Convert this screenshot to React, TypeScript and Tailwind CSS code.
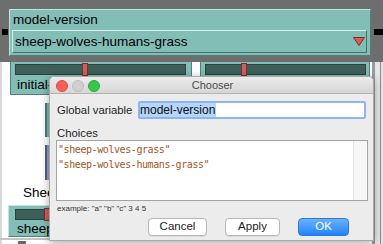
import React from "react";

const sans = "font-['Liberation_Sans',Arial,sans-serif]";

function Track({ w, handle }: { w: number; handle: number }) {
  return (
    <div
      className="relative h-[11px] bg-[#3e5f5a] border border-[#2a423e]"
      style={{ width: w }}
    >
      <div
        className="absolute top-[-2px] w-[6px] h-[13px] bg-[#c9625c] border border-[#7a302c]"
        style={{ left: handle }}
      />
    </div>
  );
}

export default function App() {
  return (
    <div className={`relative w-[383px] h-[244px] overflow-hidden bg-white text-black ${sans}`}>
      {/* selected chooser widget with its grey selection frame */}
      <div className="relative h-[62px] bg-[#6e6e6e] pt-[9px] pl-[9px]">
        <div className="flex flex-col w-[362px] h-[47px] bg-[#82bdb6] border border-t-[#c3e4df] border-l-[#c3e4df] border-b-[#4f807a] border-r-[#4f807a] pl-[2px] pr-[3px]">
          <div className="h-[20px] text-[13.5px] leading-[20px] pl-[1px]">model-version</div>
          <div className="flex items-center justify-between h-[23px] border border-t-[#d6efeb] border-l-[#d6efeb] border-b-[#45746e] border-r-[#45746e] pl-[2px] pr-[1px]">
            <span className="text-[13.5px] leading-[20px]">sheep-wolves-humans-grass</span>
            <svg width="12" height="9" viewBox="0 0 12 9">
              <polygon points="0.5,0.5 11.5,0.5 6,8.5" fill="#e05a55" stroke="#7e2c28" strokeWidth="1" />
            </svg>
          </div>
        </div>
        <div className="absolute left-[2px] top-[29px] w-[6px] h-[6px] bg-black" />
        <div className="absolute left-[374px] top-[29px] w-[9px] h-[6px] bg-black" />
      </div>

      {/* sliders row under the chooser */}
      <div className="flex h-[33px]">
        <div className="ml-[10px] w-[182px] h-full bg-[#82bdb6] border-l border-r border-b border-[#4f807a] pt-[2px] pl-[4px]">
          <Track w={171} handle={66} />
          <div className="text-[13.5px] leading-[16px] mt-[2px] pl-[2px]">initial-</div>
        </div>
        <div className="ml-[8px] w-[170px] h-full bg-[#82bdb6] border-l border-r border-b border-[#4f807a] pt-[2px] pl-[4px]">
          <Track w={161} handle={35} />
        </div>
      </div>

      {/* left border of the interface */}
      <div className="absolute left-0 top-[62px] w-[2px] h-[182px] bg-[#d8d8d8]" />

      {/* other widgets on the canvas, behind the dialog */}
      <div className="absolute left-[45px] top-[103px] w-[150px] h-[34px] bg-[#82bdb6] border-l-2 border-[#4d7d77]" />
      <div className="absolute left-[45px] top-[145px] w-[150px] h-[35px] bg-[#9d9fc7] border-l-2 border-[#5c5e88]" />
      <div className="absolute left-[23px] top-[184px] text-[13.5px] leading-[18px]">Sheep settings</div>
      <div className="absolute left-[8px] top-[205px] w-[180px] h-[32px] bg-[#82bdb6] border border-t-[#c3e4df] border-l-[#c3e4df] border-b-[#4f807a] border-r-[#4f807a] pt-[3px] pl-[6px]">
        <Track w={150} handle={28} />
        <div className="text-[13.5px] leading-[16px] mt-[1px] pl-[2px]">sheep-gain-from-food</div>
      </div>
      <div className="absolute left-0 top-[238px] w-[383px] h-[2px] bg-[#c4c4c4]" />
      <div className="absolute left-[18px] top-[241px] w-[8px] h-[3px] bg-[#6a6a6a]" />

      {/* right edge lines */}
      <div className="absolute left-[372px] top-[62px] w-[11px] h-[182px] bg-[#e6e6e6] border-l-[3px] border-[#9b9b9b]" />
      <div className="absolute left-[380px] top-[62px] w-[1px] h-[182px] bg-[#8a8a8a]" />

      {/* Chooser dialog */}
      <div className="absolute left-[49px] top-[76px] w-[325px] h-[165px] flex flex-col bg-[#ececec] border border-[#a9a9a9] rounded-t-[5px] shadow-[0_2px_8px_rgba(0,0,0,0.35)]">
        <div className="relative flex items-center justify-center h-[17px] shrink-0 rounded-t-[5px] bg-gradient-to-b from-[#ececec] to-[#d6d6d6] border-b border-[#b4b4b4]">
          <div className="absolute left-[6px] top-[3px] flex gap-[4px]">
            <div className="w-[12px] h-[12px] rounded-full bg-[#fc5f57] border border-[#df4744]" />
            <div className="w-[12px] h-[12px] rounded-full bg-[#d0d0d0] border border-[#bcbcbc]" />
            <div className="w-[12px] h-[12px] rounded-full bg-[#34c749] border border-[#27aa35]" />
          </div>
          <span className="text-[11px] leading-[17px] text-[#4b4b4b] ml-[2px]">Chooser</span>
        </div>

        <div className="flex items-center mt-[7px] h-[18px] pl-[7px]">
          <span className="w-[81px] text-[11.3px] leading-[14px] text-[#1e1e1e]">Global variable</span>
          <div className="flex items-center w-[228px] h-[18px] bg-white border-2 border-[#8db6ef] rounded-[2px]">
            <span className="bg-[#b4d5fd] text-[12px] leading-[14px] text-[#111] pr-[1px]">model-version</span>
          </div>
        </div>

        <div className="mt-[8px] pl-[7px] text-[11.3px] leading-[13px] text-[#1e1e1e]">Choices</div>

        <div className="flex ml-[6px] mt-[0px] w-[312px] h-[61px] bg-white border border-[#a3a3a3]">
          <div className="flex-1 pl-[1px] pt-[1px] font-['DejaVu_Sans_Mono',monospace] text-[10px] tracking-[-0.42px] leading-[15px] text-[#a2561e]">
            <div>"sheep-wolves-grass"</div>
            <div>"sheep-wolves-humans-grass"</div>
          </div>
          <div className="w-[14px] h-full bg-[#f7f7f7] border-l border-[#e4e4e4]" />
        </div>

        <div className="pl-[7px] mt-[3px] text-[8px] leading-[10px] text-[#333]">example: "a" "b" "c" 3 4 5</div>

        <div className="flex mt-[4px] pl-[98px] gap-[18px]">
          <div className="flex items-center justify-center w-[59px] h-[18px] bg-white border border-[#b9b9b9] rounded-[4px] text-[11.5px] text-[#1a1a1a] shadow-[0_1px_0_rgba(0,0,0,0.08)]">Cancel</div>
          <div className="flex items-center justify-center w-[55px] h-[18px] bg-white border border-[#b9b9b9] rounded-[4px] text-[11.5px] text-[#1a1a1a] shadow-[0_1px_0_rgba(0,0,0,0.08)]">Apply</div>
          <div className="flex items-center justify-center w-[51px] h-[18px] bg-gradient-to-b from-[#69b1fa] to-[#1c83fb] border border-[#2a78e0] rounded-[4px] text-[11.5px] text-white">OK</div>
        </div>
      </div>
    </div>
  );
}
